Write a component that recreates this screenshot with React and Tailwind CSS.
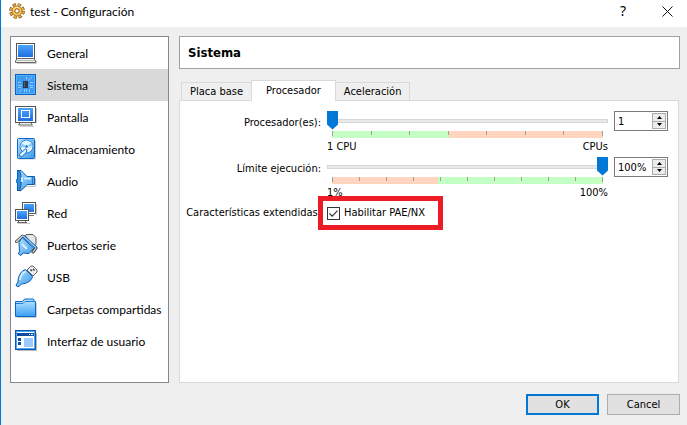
import React, { useState } from "react";

const GeneralIcon = () => (
  <svg width="22" height="22" viewBox="0 0 22 22">
    <path d="M2 21.500h19.500v-3" stroke="#ccc" fill="none" />
    <rect x="1.500" y="1.500" width="18" height="15" fill="#fff" stroke="#555" />
    <rect x="3" y="3" width="15" height="12" fill="url(#screen)" />
    <path d="M2.500 16.500h16l2 2v2H.5v-2z" fill="#f1f1ec" stroke="#666" />
    <path d="M1 18.500h19" stroke="#bbb" />
  </svg>
);

const SystemIcon = () => (
  <svg width="22" height="22" viewBox="0 0 22 22">
    <rect x=".5" y=".5" width="20" height="20" fill="#3b9bf0" stroke="#0a62c4" />
    <rect x="1.500" y="1.500" width="18" height="18" fill="none" stroke="#55aef8" />
    <path d="M3 8.500h3M3 11.500h4M3 13.500h3M15 8.500h3M14 11.500h4M15 13.500h3M11.500 5.500V3M13 6.500L17 3M4 18l3-3M9.500 15v3M11.500 15v3M14.500 15v3" stroke="#8fcaff" fill="none" />
    <rect x="8" y="7" width="5" height="7" fill="#2b3a4e" />
    <rect x="9" y="8" width="1" height="5" fill="#4d6178" />
  </svg>
);

const DisplayIcon = () => (
  <svg width="22" height="22" viewBox="0 0 22 22">
    <path d="M5 20.500h14M21.500 2v15" stroke="#ccc" />
    <path d="M4.500 16.500h12v1.500l1 1h-14l1-1z" fill="#f4f4f0" stroke="#666" />
    <rect x=".5" y=".5" width="20" height="16" fill="#fff" stroke="#555" />
    <rect x="3" y="2" width="15" height="13" fill="url(#screen)" />
    <rect x="6.500" y="4.500" width="8" height="7" fill="none" stroke="#fff" />
  </svg>
);

const StorageIcon = () => (
  <svg width="22" height="22" viewBox="0 0 22 22">
    <path d="M20.500 3v18H4" stroke="#ccc" fill="none" />
    <rect x="2.500" y=".5" width="17" height="20" rx="1" fill="url(#light)" stroke="#0b68c8" />
    <circle cx="11.500" cy="8.500" r="6.500" fill="#e4f4ff" stroke="#2789dc" />
    <path d="M11.500 8.500l5-4a7 7 0 0 1 1 4zM11.500 8.500l-5.500 1a6 6 0 0 1 1-4z" fill="#8ccbf8" />
    <circle cx="11.500" cy="8.500" r="1.500" fill="#2789dc" />
    <path d="M10.500 11L5 15.500a1.500 1.500 0 0 0 2.500 2.500L11 15l1-3z" fill="#e7f5ff" stroke="#0b68c8" />
  </svg>
);

const AudioIcon = () => (
  <svg width="22" height="22" viewBox="0 0 22 22">
    <path d="M5 21.500l6-5h9.500v-8" stroke="#c4c4c4" fill="none" />
    <path d="M2.500 .5h3.500L12 6.500h7.500v8H12l-6 6H2.500z" fill="url(#light)" stroke="#0a5bb0" />
    <path d="M2.500 .5h2c2.500 6 2.500 14 0 20h-2z" fill="#2f8fe2" stroke="#0a5bb0" />
    <path d="M1 9h2v4H1z" fill="#2a7cd4" />
    <path d="M7 7v5M9 8.500h7" stroke="#c9eaff" strokeWidth="2" />
    <path d="M17.500 7v7" stroke="#1d78cf" />
  </svg>
);

const NetworkIcon = () => (
  <svg width="22" height="22" viewBox="0 0 22 22">
    <path d="M21.500 2v11M3 21.500h12" stroke="#ccc" />
    <rect x="7.500" y=".5" width="13" height="11" fill="#fff" stroke="#555" />
    <rect x="9" y="2" width="10" height="8" fill="url(#screen)" />
    <path d="M12 13.500h7" stroke="#777" />
    <rect x=".5" y="7.500" width="13" height="11" fill="#fff" stroke="#555" />
    <rect x="2" y="9" width="10" height="8" fill="url(#screen)" />
    <path d="M2 20.500h10M3.500 19v1M10.500 19v1" stroke="#666" />
  </svg>
);

const SerialIcon = () => (
  <svg width="24" height="24" viewBox="0 0 24 24">
    <path d="M10 2.500l2-1h6l3 3v7l-2 2z" fill="#e6e6e6" stroke="#555" />
    <path d="M7 4.500L19 15.500l-5 5-6-.5-2 2.500-2.500-1.500 1-3L4 9.500z" fill="url(#light)" stroke="#0a5bb0" />
    <path d="M7 11l5 5" stroke="#d4efff" strokeWidth="2" />
    <path d="M1.500 8.500L7.500 3M21 15l-3 4" fill="none" stroke="#444" strokeWidth="3" strokeLinecap="round" />
    <path d="M1.500 8.500L7.500 3M21 15l-3 4" fill="none" stroke="#e4e8ee" strokeWidth="1.200" strokeLinecap="round" />
    <path d="M8 3L21 14.500" stroke="#0a5bb0" strokeWidth="3" />
    <path d="M8 3L21 14.500" stroke="#9fd3fa" strokeWidth="1.200" />
  </svg>
);

const UsbIcon = () => (
  <svg width="24" height="24" viewBox="0 0 24 24">
    <path d="M12 5l4-4h2l4 4v2l-4 4z" fill="#eee" stroke="#666" />
    <path d="M15.500 4.500l1.500 1.500M18 4l1.500 1.500" stroke="#444" strokeWidth="1.500" />
    <path d="M10.500 4.500l7 7c-1 4.500-5 7-11 7.500l-2.500 2.500H2l-1-1.500L3 17c0-6 3-11 7.500-12.500z" fill="url(#light)" stroke="#0a5bb0" />
    <path d="M5 15c.5-4 2.500-7 5.500-8.500" stroke="#dff3ff" strokeWidth="1.500" fill="none" />
  </svg>
);

const FolderIcon = () => (
  <svg width="22" height="22" viewBox="0 0 22 22">
    <path d="M2 19.500h19.500V5" stroke="#ccc" fill="none" />
    <path d="M.5 18.500v-15h7L9.500 1h9l1 2.500h1v15z" fill="#a9dafd" stroke="#0b68c8" />
    <path d="M1 6.500h7l2-2h10v13.500H1z" fill="url(#folder)" />
    <path d="M1 5.500h7l2-2h10" stroke="#2580d4" fill="none" />
  </svg>
);

const InterfaceIcon = () => (
  <svg width="22" height="22" viewBox="0 0 22 22">
    <path d="M2 20.500h19.500V3" stroke="#bbb" fill="none" />
    <rect x=".5" y=".5" width="20" height="19" fill="#fff" stroke="#0a5bb0" />
    <rect x="1.500" y="1.500" width="18" height="17" fill="#fff" stroke="#4aa5f5" />
    <rect x="2" y="3" width="17" height="3" fill="#0c4da2" />
    <path d="M14 4.500h1M16 4.500h2" stroke="#fff" />
    <path d="M3 8h3v3H3zM3 12h3v3H3z" fill="#0c4da2" />
    <rect x="9" y="8" width="9" height="9" fill="#9cc9ff" />
  </svg>
);

const GearIcon = () => (
  <svg width="16" height="16" viewBox="0 0 16 16">
    <circle cx="8" cy="8" r="6.300" fill="none" stroke="#6b3f0c" strokeWidth="3" strokeDasharray="3.100 1.848" />
    <circle cx="8" cy="8" r="6" fill="none" stroke="#f0b040" strokeWidth="2.500" strokeDasharray="2.200 2.512" strokeDashoffset="-.4" />
    <circle cx="8" cy="8" r="5" fill="#f8c860" stroke="#b57420" />
    <path d="M4.500 7a3.800 3.800 0 0 1 5-2.500" fill="none" stroke="#fff0c0" />
    <circle cx="8" cy="8" r="2.200" fill="#fff" stroke="#8a5510" />
  </svg>
);

const sections = [
  { name: "General", icon: GeneralIcon },
  { name: "Sistema", icon: SystemIcon },
  { name: "Pantalla", icon: DisplayIcon },
  { name: "Almacenamiento", icon: StorageIcon },
  { name: "Audio", icon: AudioIcon },
  { name: "Red", icon: NetworkIcon },
  { name: "Puertos serie", icon: SerialIcon },
  { name: "USB", icon: UsbIcon },
  { name: "Carpetas compartidas", icon: FolderIcon },
  { name: "Interfaz de usuario", icon: InterfaceIcon },
];

const tabs = ["Placa base", "Procesador", "Aceleración"];

const Gradients = () => (
  <svg width="0" height="0" className="absolute" aria-hidden="true">
    <defs>
      <linearGradient id="screen" x1="0" y1="0" x2="0" y2="1">
        <stop offset="0" stopColor="#49a5fb" />
        <stop offset="1" stopColor="#1f6ee0" />
      </linearGradient>
      <linearGradient id="light" x1="0" y1="0" x2="1" y2="1">
        <stop offset="0" stopColor="#b5e2ff" />
        <stop offset="1" stopColor="#3c9ae8" />
      </linearGradient>
      <linearGradient id="folder" x1="0" y1="0" x2="0" y2="1">
        <stop offset="0" stopColor="#a5daff" />
        <stop offset="1" stopColor="#3da0f2" />
      </linearGradient>
    </defs>
  </svg>
);

const SliderRow = ({ id, label, min, max, value, onChange, steps, split, colors, minLabel, maxLabel, suffix }) => {
  const change = (next) => onChange(Math.min(max, Math.max(min, next)));

  return (
    <>
      <label htmlFor={id} className="pt-1 text-right leading-4">{label}</label>
      <div className="min-w-0">
        <input
          id={id}
          type="range"
          min={min}
          max={max}
          value={value}
          onChange={(e) => change(Number(e.target.value))}
          className="block h-[19px] w-full appearance-none bg-transparent [&::-webkit-slider-runnable-track]:h-1 [&::-webkit-slider-runnable-track]:bg-[#e7eaea] [&::-webkit-slider-runnable-track]:shadow-[inset_0_0_0_1px_#d6d6d6] [&::-webkit-slider-thumb]:-mt-2 [&::-webkit-slider-thumb]:h-[19px] [&::-webkit-slider-thumb]:w-[11px] [&::-webkit-slider-thumb]:appearance-none [&::-webkit-slider-thumb]:bg-[#0078d7] [&::-webkit-slider-thumb]:[clip-path:polygon(0_0,100%_0,100%_74%,50%_100%,0_74%)]"
        />
        <div className="mx-[5px] mt-px flex h-[7px]">
          <div className={colors[0]} style={{ width: `${split}%` }} />
          <div className={`flex-1 ${colors[1]}`} />
        </div>
        <div className="mx-[5px] -mt-[7px] flex h-[7px] justify-between">
          {Array.from({ length: steps + 1 }, (_, i) => (
            <span key={i} className={`w-px bg-[#a0a08c] ${i === 0 || i === steps ? "h-[5px]" : "h-1"}`} />
          ))}
        </div>
        <div className="flex justify-between pt-px leading-4">
          <span>{minLabel}</span>
          <span>{maxLabel}</span>
        </div>
      </div>
      <div className="flex h-5 border border-[#7a7a7a] bg-white">
        <input
          type="text"
          aria-label={label}
          value={`${value}${suffix}`}
          onChange={(e) => change(parseInt(e.target.value) || min)}
          className="w-0 min-w-0 flex-1 pl-[3px] pt-px leading-4 outline-none"
        />
        <div className="m-px flex w-[14px] flex-col border border-[#acacac] bg-[#ececec]">
          <button aria-label="Aumentar" onClick={() => change(value + 1)} className="flex flex-1 items-center justify-center border-b border-[#acacac]">
            <svg width="5" height="3" viewBox="0 0 5 3"><path d="M0 3h5L2.500 0z" /></svg>
          </button>
          <button aria-label="Reducir" onClick={() => change(value - 1)} className="flex flex-1 items-center justify-center">
            <svg width="5" height="3" viewBox="0 0 5 3"><path d="M0 0h5L2.500 3z" /></svg>
          </button>
        </div>
      </div>
    </>
  );
};

const App = () => {
  const [section, setSection] = useState("Sistema");
  const [tab, setTab] = useState("Procesador");
  const [cpus, setCpus] = useState(1);
  const [limit, setLimit] = useState(100);
  const [pae, setPae] = useState(true);

  return (
    <div className="flex min-h-screen flex-col border-l border-[#0078d7] bg-[#efefef] font-['DejaVu_Sans_Condensed','Noto_Sans',sans-serif] text-[11px] text-black">
      <Gradients />
      <header className="flex h-[27px] items-center bg-white pb-[5px] pl-2 pr-[14px] font-['Noto_Sans',sans-serif] text-xs">
        <GearIcon />
        <h1 className="ml-[5px] flex-1 pt-px font-['Lato',sans-serif]">test - Configuración</h1>
        <button aria-label="Ayuda" className="mr-9 text-sm">?</button>
        <button aria-label="Cerrar">
          <svg width="11" height="11" viewBox="0 0 11 11" stroke="#111" fill="none">
            <path d="M.5.5l10 10M10.500.5l-10 10" />
          </svg>
        </button>
      </header>

      <div className="flex flex-1 gap-[10px] pl-[9px] pr-[7px] pt-[9px]">
        <nav className="w-[159px] shrink-0 border border-[#828790] bg-white font-['Lato',sans-serif] text-xs">
          {sections.map(({ name, icon: Icon }) => (
            <button
              key={name}
              onClick={() => setSection(name)}
              className={`flex h-8 w-full items-center whitespace-nowrap pl-1 text-left ${section === name ? "bg-[#d9d9d9]" : ""}`}
            >
              <span className="w-8 shrink-0"><Icon /></span>
              <span className="pt-[2px]">{name}</span>
            </button>
          ))}
        </nav>

        <main className="flex min-w-0 flex-1 flex-col">
          <h2 className="flex h-[33px] items-center border border-[#a0a0a0] bg-white pl-2 pt-px text-[13px] font-bold">
            {section}
          </h2>
          <div role="tablist" className="ml-[2px] mt-[11px] flex h-5 items-end">
            {tabs.map((name) => (
              <button
                key={name}
                role="tab"
                aria-selected={tab === name}
                onClick={() => setTab(name)}
                className={
                  tab === name
                    ? "z-10 -mx-px -mb-px h-[21px] border border-b-0 border-[#d9d9d9] bg-white px-[14px] pt-px"
                    : "h-[18px] border border-b-0 border-[#d9d9d9] px-2 pt-px"
                }
              >
                {name}
              </button>
            ))}
          </div>
          <div className="mr-px flex-1 border border-[#d9d9d9] bg-white pl-px pr-[10px] pt-[10px]">
            <div className="grid grid-cols-[140px_1fr_54px] gap-x-[6px] gap-y-[2px]">
              <SliderRow
                id="cpus"
                label="Procesador(es):"
                min={1}
                max={8}
                value={cpus}
                onChange={setCpus}
                steps={7}
                split={43}
                colors={["bg-[#c4ffc4]", "bg-[#ffd5c0]"]}
                minLabel="1 CPU"
                maxLabel="CPUs"
                suffix=""
              />
              <SliderRow
                id="limit"
                label="Límite ejecución:"
                min={1}
                max={100}
                value={limit}
                onChange={setLimit}
                steps={10}
                split={39}
                colors={["bg-[#ffd5c0]", "bg-[#c4ffc4]"]}
                minLabel="1%"
                maxLabel="100%"
                suffix="%"
              />
              <span className="whitespace-nowrap pt-[2px] text-right leading-4">Características extendidas:</span>
              <div className="relative col-span-2 flex h-5 items-center">
                <label className="flex items-center gap-1">
                  <span className="grid size-[13px]">
                    <input
                      type="checkbox"
                      checked={pae}
                      onChange={(e) => setPae(e.target.checked)}
                      className="col-start-1 row-start-1 size-[13px] appearance-none border border-[#333] bg-white"
                    />
                    {pae && (
                      <svg viewBox="0 0 13 13" className="pointer-events-none col-start-1 row-start-1 size-[13px]">
                        <path d="M2.500 6.500l2.700 2.700 5.300-5.500" fill="none" stroke="#333" strokeWidth="1.200" />
                      </svg>
                    )}
                  </span>
                  Habilitar PAE/NX
                </label>
                <div className="pointer-events-none absolute -left-[9px] -top-[7px] h-[34px] w-[125px] border-5 border-[#ed1c24]" />
              </div>
            </div>
          </div>
        </main>
      </div>

      <footer className="flex justify-end gap-2 pb-[10px] pr-[7px] pt-[11px]">
        <button className="h-[21px] w-[73px] border-2 border-[#0078d7] bg-[#e1e1e1] pt-px">OK</button>
        <button className="h-[21px] w-[73px] border border-[#adadad] bg-[#e1e1e1] pt-px">Cancel</button>
      </footer>
    </div>
  );
};

export default App;
